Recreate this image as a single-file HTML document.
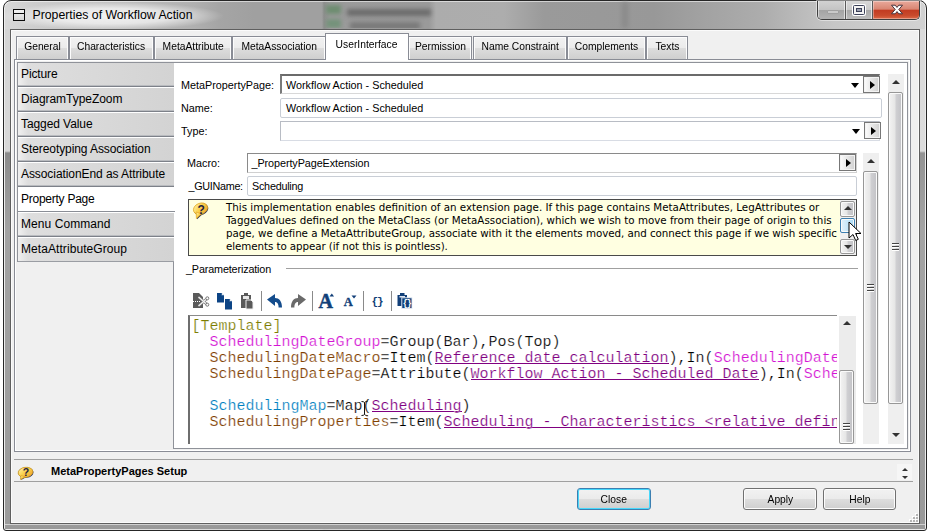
<!DOCTYPE html>
<html><head><meta charset="utf-8">
<style>
*{box-sizing:border-box;margin:0;padding:0}
html,body{width:927px;height:531px;overflow:hidden;background:#fff}
body{position:relative;font-family:"Liberation Sans",sans-serif;font-size:10.8px;color:#000}
.abs{position:absolute}
#frame{left:3px;top:0;width:924px;height:531px;border:1px solid #262626;border-radius:8px 8px 3px 3px;box-shadow:inset 0 0 0 1px rgba(255,255,255,.55);
background:
radial-gradient(ellipse 112px 14px at 108px 15px,rgba(255,255,255,.8) 0,rgba(255,255,255,.62) 55%,rgba(255,255,255,0) 100%),
linear-gradient(90deg,#d8d8d8 0,#cdcdcd 30px,#bebebe 120px,#b0b0b0 190px,#a5a5a5 215px,#a0a0a0 250px,#a0a0a0 318px,#8e8e8e 320px,#9b9b9b 326px,#9a9a9a 425px,#acacac 432px,#adadad 500px,#9a9a9a 540px,#989898 650px,#a2a2a2 700px,#adadad 760px,#bcbcbc 800px,#c6c6c6 830px,#d2d2d2 922px)}
#blur{left:316px;top:2px;width:130px;height:26px;overflow:hidden}
#blur i{position:absolute;filter:blur(2px)}
#client{left:10px;top:29px;width:910px;height:495px;background:#f0f0f0;border:1px solid #5f5f5f;box-shadow:inset 0 0 0 1px #fbfbfb}
#title{left:32.5px;top:7px;font-size:12.27px;line-height:16px;color:#000;white-space:nowrap}
.tab{position:absolute;top:36px;height:23px;border:1px solid #898c95;border-bottom:none;background:linear-gradient(#f2f2f2 0,#ebebeb 50%,#dddddd 50%,#cfcfcf 100%);font-size:11.5px;line-height:19px;text-align:center;white-space:nowrap;box-shadow:inset 1px 1px 0 0 #fcfcfc,inset -1px 0 0 0 #fcfcfc}
.tab span{display:inline-block;transform:scaleX(.895)}
.tab.sel{top:33px;height:27px;background:#fff;z-index:3;line-height:21px;box-shadow:none}
#pane{left:14px;top:59px;width:897px;height:393px;background:#f0f0f0;border:1px solid #898c95;box-shadow:inset 0 0 0 1px #fff}
#white{left:173px;top:62px;width:735px;height:387px;background:#fff;border:1px solid #8f9299}
#sl{left:17px;top:62px;width:157px;height:200px;border:1px solid #8f9299;border-right:none;background:#fff}
.side{position:absolute;left:18px;width:156px;height:25px;background:linear-gradient(90deg,#f0f0f0 0,#dedede 10px,#d3d3d3 100%);font-size:12px;line-height:23px;padding-left:3px;border-top:1px solid #fff;border-bottom:1px solid #7d8189;box-shadow:inset 0 -1px 0 #b9bbbf;white-space:nowrap;letter-spacing:-.05px;color:#000}
.side.sel{background:#fff;border-bottom-color:#8a8e96;box-shadow:none;width:157px}
.lbl{position:absolute;line-height:14px;white-space:nowrap}
.inp{position:absolute;background:#fff;border:1px solid #c9ced6;border-radius:2px;line-height:18px;padding-left:5px;white-space:nowrap}
.cmb{position:absolute;background:#fff;border-style:solid;border-color:#6b6b6b #d8d8d8 #d8d8d8 #7a7a7a;border-width:2px 1px 1px 2px;line-height:18px;padding-left:4px;white-space:nowrap}
.pb{position:absolute;width:17px;height:17px;border:1px solid #777;background:linear-gradient(90deg,#fdfdfd,#d0d0d0);box-shadow:inset 0 0 0 1px #f4f4f4}
.pb:after{content:"";position:absolute;left:6px;top:4px;border:4px solid transparent;border-left:5px solid #000;border-right:none}
.dn{position:absolute;width:0;height:0;border:4px solid transparent;border-top:5px solid #000;border-bottom:none}
.btn{position:absolute;top:488px;height:22px;border:1px solid #707070;border-radius:3px;background:linear-gradient(#f2f2f2 0,#ebebeb 48%,#dddddd 52%,#cfcfcf 100%);font-size:11.5px;line-height:20px;text-align:center;box-shadow:inset 0 0 0 1px #fcfcfc}
.btn span{display:inline-block;transform:scaleX(.895)}
#code{left:188px;top:315px;width:649px;height:129px;background:#fff;border-left:2px solid #6e6e6e;border-top:1px solid #8a8a8a;font-family:"Liberation Mono",monospace;font-size:15px;line-height:16px;white-space:pre;overflow:hidden;padding:3px 0 0 1.5px;-webkit-text-stroke:.22px #fff}
#code u{color:#800080;text-decoration:none;background:linear-gradient(#800080,#800080) 0 12.6px/100% 1px no-repeat}
.m{color:#d414d4}.o{color:#7c7c00}.b{color:#804000}.c{color:#0080c0}
#desc{left:188px;top:199px;width:669px;height:57px;background:#ffffe1;border:1px solid #4a4a4a;font-family:"DejaVu Sans",sans-serif;font-size:10.3px;line-height:13px;padding:1px 0 0 37px;white-space:nowrap;overflow:hidden}
.sb{position:absolute;background:#efefef}
.th{position:absolute;border:1px solid #979797;border-radius:2px;background:linear-gradient(90deg,#f3f3f3 0,#e6e6e6 45%,#cfcfd2 55%,#c2c2c6 100%);box-shadow:inset 0 0 0 1px #fafafa}
.up{position:absolute;width:0;height:0;border:4px solid transparent;border-bottom:4px solid #333;border-top:none}
.dw{position:absolute;width:0;height:0;border:4px solid transparent;border-top:4px solid #333;border-bottom:none}
.grip{position:absolute;width:7px;height:8px;background:linear-gradient(#444 0,#444 1px,#fff 1px,#fff 2px,transparent 2px,transparent 3px,#444 3px,#444 4px,#fff 4px,#fff 5px,transparent 5px,transparent 6px,#444 6px,#444 7px,#fff 7px)}
.sep{position:absolute;top:291px;width:1px;height:20px;background:#8a8a8a}
#ctl{left:817px;top:1px;width:103px;height:19px;border:1px solid #3f3f3f;border-top:none;border-radius:0 0 5px 5px;overflow:hidden;box-shadow:0 0 0 1px rgba(255,255,255,.45)}
</style></head><body>
<div class="abs" id="frame"></div>
<div class="abs" id="blur"><i style="left:10px;top:3px;width:15px;height:9px;background:#6d8d70"></i><i style="left:10px;top:17px;width:15px;height:9px;background:#74927a"></i><i style="left:31px;top:7px;width:84px;height:7px;background:#6c6c6c"></i><i style="left:34px;top:20px;width:70px;height:8px;background:#7a7a7a"></i></div>
<div class="abs" style="left:622px;top:2px;width:6px;height:26px;background:#8a8a8a;filter:blur(2px)"></div>
<div class="abs" id="title">Properties of Workflow Action</div>
<div class="abs" style="left:5px;top:29px;width:5px;height:495px;background:linear-gradient(#d4d4d4 0,#d8d8d8 122px,#8c8c8c 124px,#a2a2a2 200px,#a0a0a0 320px,#9a9a9a 100%)"></div>
<div class="abs" style="left:920px;top:29px;width:5px;height:495px;background:linear-gradient(#dadada 0,#dcdcdc 122px,#949494 124px,#a4a4a4 200px,#a0a0a0 320px,#9a9a9a 100%)"></div>
<div class="abs" style="left:5px;top:524px;width:920px;height:5px;background:linear-gradient(#d0d0d0 0,#d0d0d0 1px,#9a9a9a 1px,#999 100%)"></div>
<div class="abs" id="client"></div>

<div class="tab" style="left:16px;width:53px"><span>General</span></div>
<div class="tab" style="left:69px;width:85px"><span>Characteristics</span></div>
<div class="tab" style="left:154px;width:78px"><span>MetaAttribute</span></div>
<div class="tab" style="left:232px;width:94px"><span>MetaAssociation</span></div>
<div class="tab" style="left:408px;width:64px"><span>Permission</span></div>
<div class="tab" style="left:473px;width:94px"><span>Name Constraint</span></div>
<div class="tab" style="left:567px;width:79px"><span>Complements</span></div>
<div class="tab" style="left:646px;width:42px"><span>Texts</span></div>
<div class="abs" id="pane"></div>
<div class="abs" id="white"></div>
<div class="abs" id="sl"></div>
<div class="tab sel" style="left:325px;width:84px"><span>UserInterface</span></div>

<div class="side" style="top:62px;border-top-color:#8f9299;letter-spacing:-0.12px">Picture</div>
<div class="side" style="top:87px;letter-spacing:-0.04px">DiagramTypeZoom</div>
<div class="side" style="top:112px;letter-spacing:-0.085px">Tagged Value</div>
<div class="side" style="top:137px;letter-spacing:-0.08px">Stereotyping Association</div>
<div class="side" style="top:162px;letter-spacing:-0.077px">AssociationEnd as Attribute</div>
<div class="side sel" style="top:187px;letter-spacing:-0.25px">Property Page</div>
<div class="side" style="top:212px;letter-spacing:0.065px">Menu Command</div>
<div class="side" style="top:237px;border-bottom-color:#9a9da3;box-shadow:none;letter-spacing:0.07px">MetaAttributeGroup</div>

<div class="lbl" style="left:181px;top:78px">MetaPropertyPage:</div>
<div class="lbl" style="left:181px;top:101px">Name:</div>
<div class="lbl" style="left:181px;top:124px">Type:</div>
<div class="cmb" style="left:280px;top:74px;width:600px;height:20px">Workflow Action - Scheduled</div>
<div class="dn" style="left:851px;top:83px"></div>
<div class="pb" style="left:863px;top:76px"></div>
<div class="inp" style="left:280px;top:98px;width:602px;height:20px">Workflow Action - Scheduled</div>
<div class="inp" style="left:280px;top:121px;width:600px;height:20px;border-radius:0;border-color:#b8bcc4 #d8dce4 #d8dce4 #b8bcc4"></div>
<div class="dn" style="left:852px;top:129px"></div>
<div class="pb" style="left:864px;top:122px"></div>

<div class="sb" style="left:888px;top:74px;width:16px;height:370px"></div>
<div class="up" style="left:892px;top:80px"></div>
<div class="th" style="left:888px;top:92px;width:15px;height:312px"></div>
<div class="grip" style="left:892px;top:243px"></div>
<div class="dw" style="left:892px;top:433px"></div>

<div class="lbl" style="left:187px;top:156px">Macro:</div>
<div class="lbl" style="left:188.5px;top:179px;letter-spacing:-.3px">_GUIName:</div>
<div class="inp" style="left:247px;top:153px;width:610px;height:20px;border-radius:0;border-color:#8a8a8a #d0d0d0 #d0d0d0 #8a8a8a;padding-left:3.5px;letter-spacing:-.07px">_PropertyPageExtension</div>
<div class="pb" style="left:839px;top:154px"></div>
<div class="inp" style="left:247px;top:176px;width:610px;height:20px;padding-left:4px;letter-spacing:-.24px">Scheduling</div>

<div class="sb" style="left:863px;top:153px;width:16px;height:291px"></div>
<div class="up" style="left:867px;top:159px"></div>
<div class="th" style="left:863px;top:171px;width:15px;height:233px"></div>
<div class="grip" style="left:867px;top:284px"></div>

<div class="abs" id="desc">This implementation enables definition of an extension page. If this page contains MetaAttributes, LegAttributes or<br>TaggedValues defined on the MetaClass (or MetaAssociation), which we wish to move from their page of origin to this<br><span style="letter-spacing:-.04px">page, we define a MetaAttributeGroup, associate with it the elements moved, and connect this page if we wish specific</span><br><span style="letter-spacing:-.074px">elements to appear (if not this is pointless).</span></div>
<div class="sb" style="left:840px;top:200px;width:16px;height:55px;background:#f0f0f0"></div>
<div class="th" style="left:840px;top:201px;width:15px;height:16px"></div>
<div class="up" style="left:844px;top:206px"></div>
<div class="th" style="left:840px;top:218px;width:15px;height:15px;border-color:#3c7fb1;background:linear-gradient(90deg,#e4f3fc,#a9dbf6)"></div>
<div class="th" style="left:840px;top:239px;width:15px;height:15px"></div>
<div class="dw" style="left:844px;top:245px"></div>

<div class="lbl" style="left:186px;top:262px;letter-spacing:-.15px">_Parameterization</div>
<div class="abs" style="left:286px;top:268px;width:572px;height:1px;background:#a0a0a0"></div>

<div class="sep" style="left:261px"></div><div class="sep" style="left:312px"></div><div class="sep" style="left:363px"></div><div class="sep" style="left:391px"></div>

<div class="abs" id="code"><span class="o">[Template]</span>
  <span class="m">SchedulingDateGroup</span>=Group(Bar),Pos(Top)
  <span class="b">SchedulingDateMacro</span>=Item(<u>Reference date calculation</u>),In(<span class="m">SchedulingDateGroup</span>)
  <span class="b">SchedulingDatePage</span>=Attribute(<u>Workflow Action - Scheduled Date</u>),In(<span class="m">SchedulingDateGroup</span>)

  <span class="c">SchedulingMap</span>=Map(<u>Scheduling</u>)
  <span class="b">SchedulingProperties</span>=Item(<u>Scheduling - Characteristics &lt;relative definition&gt;</u>)</div>
<div class="sb" style="left:839px;top:316px;width:17px;height:128px;background:#ececec"></div>
<div class="up" style="left:843px;top:321px"></div>
<div class="th" style="left:839px;top:370px;width:15px;height:74px"></div>
<div class="grip" style="left:843px;top:423px"></div>

<div class="abs" style="left:14px;top:459px;width:899px;height:1px;background:#a0a0a0"></div>
<div class="abs" style="left:14px;top:481px;width:899px;height:1px;background:#a0a0a0"></div>
<div class="lbl" style="left:51px;top:464px;font-weight:bold;font-size:11px">MetaPropertyPages Setup</div>
<div class="abs" style="left:897px;top:464px;width:15px;height:16px;background:#f6f6f6"></div><div class="up" style="left:901.5px;top:468px;border-width:3.5px;border-bottom-width:3.5px"></div>
<div class="dw" style="left:901.5px;top:476px;border-width:3.5px;border-top-width:3.5px"></div>

<div class="btn" style="left:577px;width:74px;border-color:#3c7fb1;box-shadow:inset 0 0 0 1px #48d8fb"><span>Close</span></div>
<div class="btn" style="left:743px;width:74px"><span>Apply</span></div>
<div class="btn" style="left:823px;width:73px"><span>Help</span></div>

<!-- title icon -->
<svg class="abs" style="left:13px;top:9px" width="12" height="12" viewBox="0 0 12 12"><defs><linearGradient id="ig" x1="0" y1="0" x2="0" y2="1"><stop offset="0" stop-color="#f4f4f4"/><stop offset="1" stop-color="#d4d4d4"/></linearGradient></defs><rect x=".5" y=".5" width="11" height="11" fill="url(#ig)" stroke="#0a0a0a"/><rect x="0" y="4" width="12" height="1" fill="#0a0a0a"/></svg>
<!-- window controls -->
<div class="abs" id="ctl">
 <div class="abs" style="left:0;top:0;width:28px;height:18px;border-right:1px solid #5a5a5a;background:linear-gradient(#d2d2d2 0,#c4c4c4 48%,#a4a4a4 52%,#b4b4b4 100%);box-shadow:inset -1px 0 0 rgba(255,255,255,.6),inset 1px 0 0 rgba(255,255,255,.5)"><div class="abs" style="left:9px;top:9px;width:12px;height:4px;background:#c9c9c9;border:1px solid #a0a0a0;border-radius:1px"></div></div>
 <div class="abs" style="left:28px;top:0;width:27px;height:18px;border-right:1px solid #5a5a5a;background:linear-gradient(#d8d8d8 0,#cacaca 48%,#a8a8a8 52%,#bcbcbc 100%);box-shadow:inset -1px 0 0 rgba(255,255,255,.6),inset 1px 0 0 rgba(255,255,255,.5)"><svg class="abs" style="left:6px;top:3px" width="14" height="12" viewBox="0 0 14 12"><rect x="1" y="1" width="12" height="10" rx="1" fill="#fff" stroke="#fff" stroke-width="2"/><rect x="1.5" y="1.5" width="11" height="9" rx="1" fill="#f4f4f4" stroke="#3b4058"/><rect x="4.5" y="4.5" width="5" height="3" fill="#9aa0b0" stroke="#3b4058"/></svg></div>
 <div class="abs" style="left:55px;top:0;width:47px;height:18px;background:linear-gradient(#e9a99b 0,#d98673 45%,#c23c22 52%,#c94a2c 80%,#dc6a48 100%);box-shadow:inset 0 0 0 1px rgba(255,255,255,.35);border-bottom-right-radius:4px"><svg class="abs" style="left:17px;top:2px" width="14" height="13" viewBox="0 0 14 13"><path d="M1.500 2.200h3.700l1.800 2.200 1.800-2.200h3.700l-3.700 4.300 3.700 4.300h-3.700l-1.800-2.200-1.800 2.200h-3.700l3.700-4.300z" fill="#fff" stroke="#46323a" stroke-width="1" stroke-linejoin="round"/></svg></div>
</div>
<!-- toolbar icons -->
<svg class="abs" style="left:192px;top:292px" width="224" height="18" viewBox="0 0 224 18">
 <!-- cut -->
 <path d="M1 1h6l4 4v11H1z" fill="#5a5a5a"/><path d="M1 9.5h8" stroke="#fff" stroke-width="1" stroke-dasharray="1 1"/><path d="M6.500 5l8 7M6.500 14l8-7" stroke="#777" stroke-width="2.600"/><path d="M6.500 5l8 7M6.500 14l8-7" stroke="#f4f4f4" stroke-width="1.300"/><circle cx="15.300" cy="6.300" r="1.500" fill="#fff" stroke="#666" stroke-width=".9"/><circle cx="15.300" cy="12.700" r="1.500" fill="#fff" stroke="#666" stroke-width=".9"/>
 <!-- copy -->
 <path d="M25 1h4.500l2.500 2.500v7h-7z" fill="#0c4485"/><path d="M29.500 1v2.500h2.500" fill="#fff" stroke="#0c4485" stroke-width=".6"/><path d="M33 7h4.500l2.500 2.500v8h-7z" fill="#0c4485"/><path d="M37.500 7v2.500h2.500" fill="#fff" stroke="#0c4485" stroke-width=".6"/>
 <!-- paste -->
 <path d="M49 3h10v13H49z" fill="#595959"/><rect x="52" y="1" width="4" height="3" fill="#595959"/><rect x="51" y="4" width="6" height="3" fill="#e8e8e8"/><path d="M54 8h5l2 2v7h-7z" fill="#595959" stroke="#f0f0f0" stroke-width="1"/>
 <!-- undo -->
 <path d="M75 7.5L83 2v4c4 0 7 3 7 9.5h-3.4c0-4-1.6-5.500-3.600-5.500v4z" fill="#144c8c"/>
 <!-- redo -->
 <path d="M114 7.500L106 2v4c-4 0-7 3-7 9.500h3.400c0-4 1.600-5.500 3.600-5.500v4z" fill="#6a6a6a"/>
 <!-- A up -->
 <text x="126.500" y="15.800" font-family="Liberation Serif,serif" font-weight="bold" font-size="20" fill="#123f78" stroke="#123f78" stroke-width=".5">A</text><path d="M137.500 4.500l2.300-3 2.300 3z" fill="#123f78"/>
 <!-- a down -->
 <text x="151.800" y="14" font-family="Liberation Serif,serif" font-weight="bold" font-size="12.500" fill="#123f78" stroke="#123f78" stroke-width=".3">A</text><path d="M159.500 3.500h5l-2.500 3z" fill="#123f78"/>
 <!-- braces -->
 <text x="179.500" y="13" font-family="Liberation Mono,monospace" font-weight="bold" font-size="11" fill="#123f78" letter-spacing="-1">{}</text>
 <!-- paste braces -->
 <path d="M205.500 3h9.500v11h-9.500z" fill="#123f78"/><rect x="208" y="1" width="4.500" height="3" fill="#123f78"/><rect x="207.500" y="4" width="5.500" height="1.500" fill="#dfe6f0"/><rect x="209.800" y="5.800" width="10.200" height="10.700" fill="#123f78" stroke="#e8eef6" stroke-width=".9"/><text x="210.800" y="14.300" font-family="Liberation Mono,monospace" font-weight="bold" font-size="8.500" fill="#fff" letter-spacing="-1.200">{}</text>
</svg>
<!-- question icons -->
<svg class="abs" style="left:191px;top:201px" width="19" height="20" viewBox="0 0 19 20"><defs><linearGradient id="qg" x1="0" y1="0" x2="1" y2="1"><stop offset="0" stop-color="#fff6b8"/><stop offset=".45" stop-color="#fbd24e"/><stop offset="1" stop-color="#ee9c28"/></linearGradient><g id="qb"><ellipse cx="9.500" cy="7.700" rx="7.300" ry="5.500" transform="rotate(-22 9.500 7.700)"/><path d="M5.200 11L5.400 17.600 10.500 12.800z"/></g></defs><use href="#qb" fill="#2c3258" transform="translate(.7 .7)"/><use href="#qb" fill="url(#qg)" stroke="#e0a520" stroke-width=".7"/><text x="6.600" y="13" font-family="Liberation Sans,sans-serif" font-weight="bold" font-size="12" fill="#1c2244">?</text></svg>
<svg class="abs" style="left:17px;top:465px" width="17" height="16" viewBox="0 0 17 16"><g id="qc"><ellipse cx="8.500" cy="7.300" rx="7.400" ry="5" transform="rotate(-8 8.500 7.300)"/><path d="M4 10.500L3.600 14.500 8 11.800z"/></g><use href="#qc" fill="#2c3258" transform="translate(.6 .6)"/><use href="#qc" fill="url(#qg)" stroke="#e0a520" stroke-width=".7"/><text x="5.700" y="11.200" font-family="Liberation Sans,sans-serif" font-weight="bold" font-size="10.500" fill="#1c2244">?</text></svg>
<!-- cursor -->
<svg class="abs" style="left:848px;top:221px;z-index:9" width="14" height="21" viewBox="0 0 14 21"><path d="M1 1v16l4-3.500 2.700 6 2.600-1.200-2.700-5.800H13z" fill="#fff" stroke="#000" stroke-width="1" stroke-linejoin="miter"/></svg>
<!-- I-beam -->
<svg class="abs" style="left:360px;top:400px;z-index:9" width="9" height="17" viewBox="0 0 9 17"><path d="M1.500 1.500c1.500 0 2.500.3 3 1 .5-.7 1.500-1 3-1M1.500 15.500c1.500 0 2.500-.3 3-1 .5.700 1.500 1 3 1M4.500 2.500v12" fill="none" stroke="#111" stroke-width="1"/></svg>
<!-- size grip -->
<div class="abs" style="left:916px;top:514px;width:2px;height:2px;background:#b4b4b4;box-shadow:-1px -1px 0 #fff"></div><div class="abs" style="left:913px;top:517px;width:2px;height:2px;background:#b4b4b4;box-shadow:-1px -1px 0 #fff"></div><div class="abs" style="left:916px;top:517px;width:2px;height:2px;background:#b4b4b4;box-shadow:-1px -1px 0 #fff"></div><div class="abs" style="left:910px;top:520px;width:2px;height:2px;background:#b4b4b4;box-shadow:-1px -1px 0 #fff"></div><div class="abs" style="left:913px;top:520px;width:2px;height:2px;background:#b4b4b4;box-shadow:-1px -1px 0 #fff"></div><div class="abs" style="left:916px;top:520px;width:2px;height:2px;background:#b4b4b4;box-shadow:-1px -1px 0 #fff"></div>
</body></html>
